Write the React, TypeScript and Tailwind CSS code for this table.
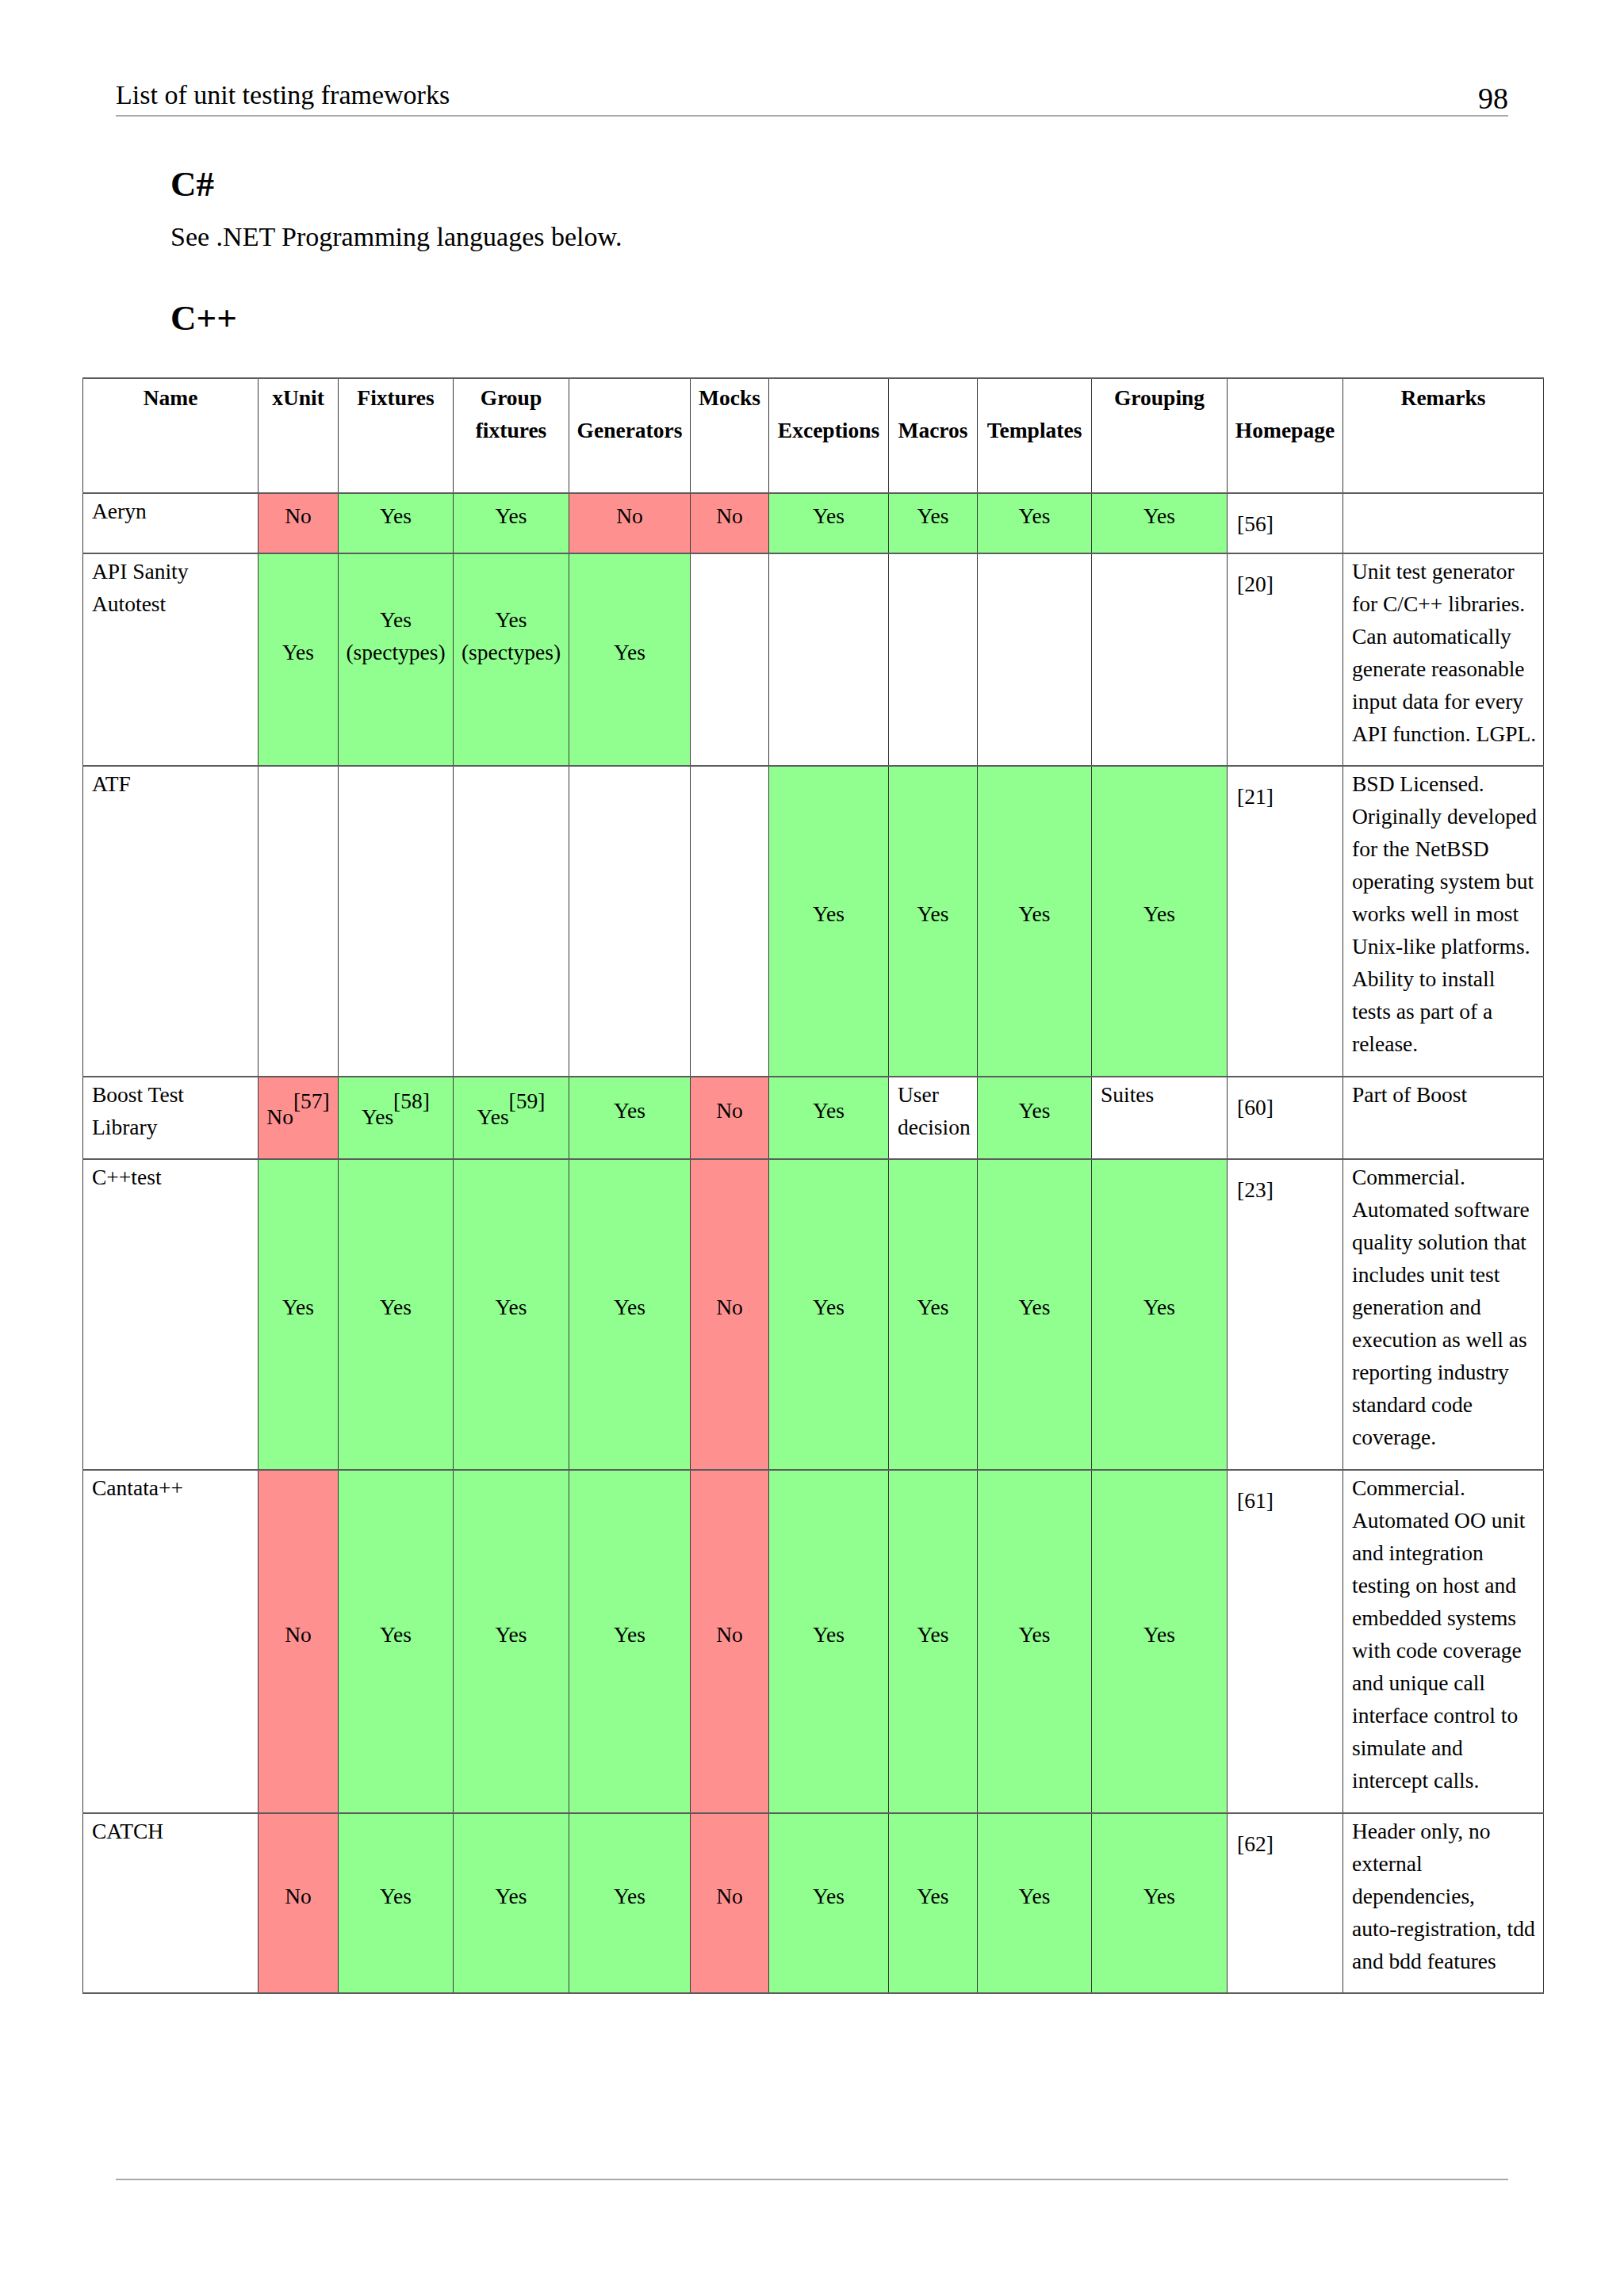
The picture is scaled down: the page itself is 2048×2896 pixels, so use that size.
import React from 'react'

type Cell = {
    k: 'y' | 'n' | 'blank' | 'text'
    lines?: string[]
    sup?: string
    pad?: string
}

const Y: Cell = { k: 'y', lines: ['Yes'], pad: 'pb-[19px]' }
const N: Cell = { k: 'n', lines: ['No'], pad: 'pb-[19px]' }
const B: Cell = { k: 'blank' }
const spec: Cell = { k: 'y', lines: ['Yes', '(spectypes)'], pad: 'pb-[60px]' }

type Row = {
    h: string
    name: string[]
    cells: Cell[]
    home: string
    remarks: string[]
}

const rows: Row[] = [
    {
        h: 'h-[76px]',
        name: ['Aeryn'],
        cells: [N, Y, Y, N, N, Y, Y, Y, Y],
        home: '[56]',
        remarks: [],
    },
    {
        h: 'h-[268px]',
        name: ['API Sanity', 'Autotest'],
        cells: [Y, spec, spec, Y, B, B, B, B, B],
        home: '[20]',
        remarks: [
            'Unit test generator',
            'for C/C++ libraries.',
            'Can automatically',
            'generate reasonable',
            'input data for every',
            'API function. LGPL.',
        ],
    },
    {
        h: 'h-[392px]',
        name: ['ATF'],
        cells: [B, B, B, B, B, Y, Y, Y, Y],
        home: '[21]',
        remarks: [
            'BSD Licensed.',
            'Originally developed',
            'for the NetBSD',
            'operating system but',
            'works well in most',
            'Unix-like platforms.',
            'Ability to install',
            'tests as part of a',
            'release.',
        ],
    },
    {
        h: 'h-[104px]',
        name: ['Boost Test', 'Library'],
        cells: [
            { k: 'n', lines: ['No'], sup: '[57]', pad: 'pb-[3px]' },
            { k: 'y', lines: ['Yes'], sup: '[58]', pad: 'pb-[3px]' },
            { k: 'y', lines: ['Yes'], sup: '[59]', pad: 'pb-[3px]' },
            Y,
            N,
            Y,
            { k: 'text', lines: ['User', 'decision'] },
            Y,
            { k: 'text', lines: ['Suites'] },
        ],
        home: '[60]',
        remarks: ['Part of Boost'],
    },
    {
        h: 'h-[392px]',
        name: ['C++test'],
        cells: [Y, Y, Y, Y, N, Y, Y, Y, Y],
        home: '[23]',
        remarks: [
            'Commercial.',
            'Automated software',
            'quality solution that',
            'includes unit test',
            'generation and',
            'execution as well as',
            'reporting industry',
            'standard code',
            'coverage.',
        ],
    },
    {
        h: 'h-[433px]',
        name: ['Cantata++'],
        cells: [N, Y, Y, Y, N, Y, Y, Y, Y],
        home: '[61]',
        remarks: [
            'Commercial.',
            'Automated OO unit',
            'and integration',
            'testing on host and',
            'embedded systems',
            'with code coverage',
            'and unique call',
            'interface control to',
            'simulate and',
            'intercept calls.',
        ],
    },
    {
        h: 'h-[227px]',
        name: ['CATCH'],
        cells: [N, Y, Y, Y, N, Y, Y, Y, Y],
        home: '[62]',
        remarks: [
            'Header only, no',
            'external',
            'dependencies,',
            'auto-registration, tdd',
            'and bdd features',
        ],
    },
]

// header labels; "low" ones sit on the second line like in the PDF
const heads: { lines: string[]; low?: boolean }[] = [
    { lines: ['Name'] },
    { lines: ['xUnit'] },
    { lines: ['Fixtures'] },
    { lines: ['Group', 'fixtures'] },
    { lines: ['Generators'], low: true },
    { lines: ['Mocks'] },
    { lines: ['Exceptions'], low: true },
    { lines: ['Macros'], low: true },
    { lines: ['Templates'], low: true },
    { lines: ['Grouping'] },
    { lines: ['Homepage'], low: true },
    { lines: ['Remarks'] },
]

const line = 'border-x border-y-2 border-x-[#3a3a3a] border-y-[#5c5c5c]'

const Lines = ({ lines }: { lines: string[] }) => (
    <>
        {lines.map((l, i) => (
            <div key={i} className="whitespace-nowrap">
                {l}
            </div>
        ))}
    </>
)

const ValueCell = ({ c }: { c: Cell }) => {
    if (c.k === 'blank') return <td className={`${line} bg-white`}></td>
    if (c.k === 'text')
        return (
            <td className={`${line} bg-white align-top text-left pt-[1px] pl-[11px]`}>
                <Lines lines={c.lines || []} />
            </td>
        )
    const bg = c.k === 'y' ? 'bg-[#90ff90]' : 'bg-[#ff9090]'
    return (
        <td className={`${line} ${bg} ${c.pad} align-middle text-center`}>
            {c.sup ? (
                <span className="whitespace-nowrap">
                    {c.lines?.[0]}
                    <sup className="text-[27.5px] top-[-20px]">{c.sup}</sup>
                </span>
            ) : (
                <Lines lines={c.lines || []} />
            )}
        </td>
    )
}

const App = () => {
    return (
        <div className="w-[2048px] h-[2896px] bg-white text-black flex flex-col font-['Liberation_Serif',serif]">
            <div className="ml-[146px] w-[1756px] pt-[103px] pb-[2px] flex justify-between items-start border-b-2 border-[#aaaaaa]">
                <span className="text-[34px] leading-none">List of unit testing frameworks</span>
                <span className="text-[38px] leading-none mt-[2px]">98</span>
            </div>

            <div className="ml-[215px]">
                <h2 className="mt-[63px] text-[45px] leading-none font-bold">C#</h2>
                <p className="mt-[27px] text-[34px] leading-none">See .NET Programming languages below.</p>
                <h2 className="mt-[63px] text-[45px] leading-none font-bold">C++</h2>
            </div>

            <table className="mt-[52px] ml-[104px] w-[1842px] table-fixed border-collapse text-[27.5px] leading-[41px]">
                <colgroup>
                    <col className="w-[221px]" />
                    <col className="w-[101px]" />
                    <col className="w-[145px]" />
                    <col className="w-[146px]" />
                    <col className="w-[153px]" />
                    <col className="w-[99px]" />
                    <col className="w-[151px]" />
                    <col className="w-[112px]" />
                    <col className="w-[144px]" />
                    <col className="w-[171px]" />
                    <col className="w-[146px]" />
                    <col className="w-[253px]" />
                </colgroup>
                <thead>
                    <tr className="h-[145px]">
                        {heads.map((h, i) => (
                            <th
                                key={i}
                                className={`${line} align-top text-center font-bold ${h.low ? 'pt-[44px]' : 'pt-[3px]'}`}
                            >
                                <Lines lines={h.lines} />
                            </th>
                        ))}
                    </tr>
                </thead>
                <tbody>
                    {rows.map((r, i) => (
                        <tr key={i} className={r.h}>
                            <td className={`${line} align-top pt-[1px] pl-[11px]`}>
                                <Lines lines={r.name} />
                            </td>
                            {r.cells.map((c, j) => (
                                <ValueCell key={j} c={c} />
                            ))}
                            <td className={`${line} align-top pt-[17px] pl-[12px]`}>{r.home}</td>
                            <td className={`${line} align-top pt-[1px] pl-[11px]`}>
                                <Lines lines={r.remarks} />
                            </td>
                        </tr>
                    ))}
                </tbody>
            </table>

            <div className="flex-1"></div>
            <div className="ml-[146px] w-[1756px] border-b-2 border-[#aaaaaa] mb-[146px]"></div>
        </div>
    )
}

export default App
